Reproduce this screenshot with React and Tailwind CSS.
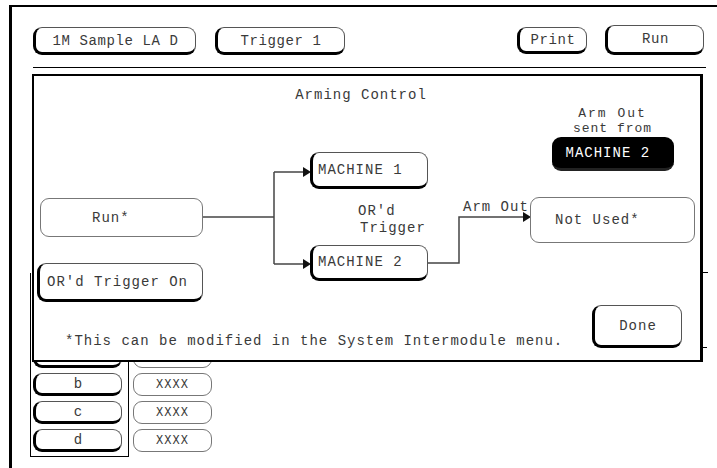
import React from 'react';

// raised soft-key look: heavy left + bottom edge, thin top/right
const raised = "rounded-[9px] border border-[#555] border-l-[3px] border-b-[3px] border-l-black border-b-black bg-white";
const field = "rounded-[9px] border border-[#777] bg-white";

function Key({ className = '', children }) {
    return (
        <div className={`${raised} flex items-center justify-center ${className}`}>
            {children}
        </div>
    );
}

export default function App() {
    const rows = ['a', 'b', 'c', 'd'];

    return (
        <div className="w-[717px] h-[468px] bg-white relative overflow-hidden font-['Liberation_Mono',monospace] text-[14px] tracking-[1px] text-[#3a3a3a] leading-none">

            {/* Screen frame */}
            <div className="ml-[9px] mt-[5px] h-[463px] border-l-[3px] border-t-2 border-black flex flex-col">

                {/* Header soft keys */}
                <div className="flex items-end pl-[21px] pr-[13px] pt-[18px] tracking-[0.6px]">
                    <Key className="w-[163px] h-[28px] pt-[2px]">1M Sample LA D</Key>
                    <Key className="w-[130px] h-[28px] ml-[19px] pt-[2px]">Trigger 1</Key>
                    <div className="flex-1" />
                    <Key className="w-[70px] h-[27px] mb-[1px]">Print</Key>
                    <Key className="w-[99px] h-[30px] ml-[18px]">Run</Key>
                </div>
                <div className="mt-[12px] ml-[21px] mr-[11px] border-t border-black" />

                {/* Background term list (mostly hidden by the dialog) */}
                <div className="mt-[205px] ml-[18px] flex items-end">
                    <div className="w-[99px] h-[184px] border-l border-r border-b border-black flex flex-col justify-end gap-[5px] pb-[4px] pl-[2px]">
                        {rows.map((r) => (
                            <Key key={r} className="w-[89px] h-[23px]">{r}</Key>
                        ))}
                    </div>
                    <div className="ml-[4px] flex flex-col gap-[5px] pb-[5px]">
                        {rows.map((r) => (
                            <div key={r} className={`${field} w-[79px] h-[23px] flex items-center justify-center text-[12px]`}>XXXX</div>
                        ))}
                    </div>
                </div>
            </div>

            {/* Arming Control dialog */}
            <div className="absolute left-[32px] top-[74px] w-[671px] h-[288px] border-2 border-r-[3px] border-black bg-white flex flex-col">
                {/* connector wires */}
                <svg className="absolute inset-0 pointer-events-none" width="666" height="284">
                    <g stroke="#444" strokeWidth="1.5" fill="none">
                        <path d="M169 141 H240" />
                        <path d="M240 96 V188" />
                        <path d="M240 96 H270" />
                        <path d="M240 188 H270" />
                        <path d="M394 187 H425 V141 H490" />
                    </g>
                    <g fill="#111">
                        <polygon points="269,91 277,96 269,101" />
                        <polygon points="269,183 277,188 269,193" />
                        <polygon points="489,136 497,141 489,146" />
                    </g>
                </svg>

                <div className="pt-[12px] flex justify-center pr-[12px]">Arming Control</div>

                <div className="relative mt-[4px] h-[199px] flex">
                    {/* source */}
                    <div className="w-[169px] flex flex-col items-start pl-[3px] pt-[92px] gap-[26px]">
                        <div className={`${field} ml-[3px] w-[163px] h-[39px] flex items-center pl-[51px]`}>Run*</div>
                        <div className={`${raised} w-[166px] h-[39px] flex items-center pl-[7px]`}>OR'd Trigger On</div>
                    </div>

                    {/* machines */}
                    <div className="ml-[107px] w-[118px] flex flex-col pt-[46px]">
                        <div className={`${raised} h-[37px] flex items-center pl-[5px]`}>MACHINE 1</div>
                        <div className="mt-[14px] pl-[48px] leading-[17px]">
                            <div>OR'd</div>
                            <div className="ml-[2px]">Trigger</div>
                        </div>
                        <div className={`${raised} mt-[8px] h-[36px] flex items-center pl-[5px]`}>MACHINE 2</div>
                    </div>

                    {/* wire label */}
                    <div className="w-[102px] pt-[94px] pl-[35px]">Arm Out</div>

                    {/* arm out target */}
                    <div className="w-[165px] flex flex-col items-center">
                        <div className="text-center text-[13px] leading-[15px]">
                            <div className="tracking-[2px]">Arm Out</div>
                            <div>sent from</div>
                        </div>
                        <div className="mt-[1px] w-[122px] h-[34px] rounded-[9px] bg-black border-b-[3px] border-[#222] text-white flex items-center pl-[14px]">
                            MACHINE 2
                        </div>
                        <div className={`${field} mt-[26px] self-stretch h-[46px] flex items-center pl-[24px]`}>Not Used*</div>
                    </div>
                </div>

                <div className="flex items-end justify-between pl-[31px] pr-[18px]">
                    <div>*This can be modified in the System Intermodule menu.</div>
                    <Key className="w-[90px] h-[43px]">Done</Key>
                </div>
            </div>

            {/* little ticks on the right edge of the dialog */}
            <div className="absolute left-[703px] top-[272px] w-[5px] border-t border-black" />
            <div className="absolute left-[703px] top-[347px] w-[4px] border-t border-black" />
        </div>
    );
}
